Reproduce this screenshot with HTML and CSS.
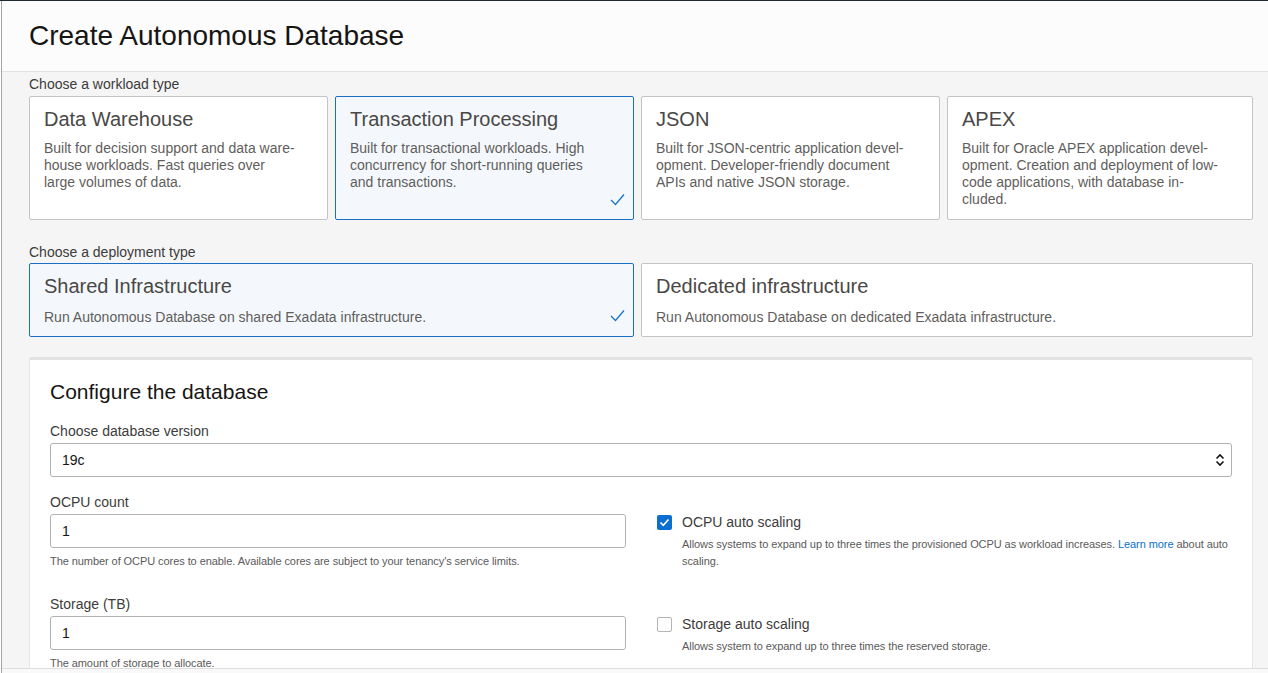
FILE: index.html
```html
<!DOCTYPE html>
<html lang="en">
<head>
<meta charset="utf-8">
<title>Create Autonomous Database</title>
<link rel="stylesheet" href="styles.css">
</head>
<body>
<div class="page">
  <header class="header">
    <h1>Create Autonomous Database</h1>
  </header>
  <main class="content">
    <div class="section-label">Choose a workload type</div>
    <div class="workload-grid">
      <div class="card">
        <div class="card-title">Data Warehouse</div>
        <div class="card-desc">Built for decision support and data ware-<br>house workloads. Fast queries over<br>large volumes of data.</div>
      </div>
      <div class="card selected">
        <div class="card-title">Transaction Processing</div>
        <div class="card-desc">Built for transactional workloads. High<br>concurrency for short-running queries<br>and transactions.</div>
        <svg class="check" viewBox="0 0 15 13" width="15" height="13"><polyline points="1,7 5.5,11.5 14,1.5" fill="none" stroke="#1a73c8" stroke-width="1.3"/></svg>
      </div>
      <div class="card">
        <div class="card-title">JSON</div>
        <div class="card-desc">Built for JSON-centric application devel-<br>opment. Developer-friendly document<br>APIs and native JSON storage.</div>
      </div>
      <div class="card">
        <div class="card-title">APEX</div>
        <div class="card-desc">Built for Oracle APEX application devel-<br>opment. Creation and deployment of low-<br>code applications, with database in-<br>cluded.</div>
      </div>
    </div>

    <div class="section-label deploy-label">Choose a deployment type</div>
    <div class="deploy-grid">
      <div class="card selected">
        <div class="card-title">Shared Infrastructure</div>
        <div class="card-desc deploy-desc">Run Autonomous Database on shared Exadata infrastructure.</div>
        <svg class="check check-deploy" viewBox="0 0 15 13" width="15" height="13"><polyline points="1,7 5.5,11.5 14,1.5" fill="none" stroke="#1a73c8" stroke-width="1.3"/></svg>
      </div>
      <div class="card">
        <div class="card-title">Dedicated infrastructure</div>
        <div class="card-desc deploy-desc">Run Autonomous Database on dedicated Exadata infrastructure.</div>
      </div>
    </div>

    <section class="panel">
      <h2 class="panel-title">Configure the database</h2>
      <div class="field first">
        <label class="field-label">Choose database version</label>
        <div class="select">
          <span>19c</span>
          <svg class="chev" viewBox="0 0 10 14" width="10" height="14"><path d="M1.5 5.5 L5 2 L8.5 5.5 M1.5 8.5 L5 12 L8.5 8.5" fill="none" stroke="#161513" stroke-width="1.6"/></svg>
        </div>
      </div>

      <div class="row">
        <div class="field">
          <label class="field-label">OCPU count</label>
          <div class="input">1</div>
          <div class="help">The number of OCPU cores to enable. Available cores are subject to your tenancy's service limits.</div>
        </div>
        <div class="opt">
          <div class="opt-head">
            <span class="cb checked"><svg viewBox="0 0 15 15" width="15" height="15"><polyline points="3.5,7.5 6.3,10.3 11.5,4.5" fill="none" stroke="#fff" stroke-width="1.6"/></svg></span>
            <span class="opt-label">OCPU auto scaling</span>
          </div>
          <div class="help opt-help">Allows systems to expand up to three times the provisioned OCPU as workload increases. <a class="link">Learn more</a> about auto<br>scaling.</div>
        </div>
      </div>

      <div class="row second">
        <div class="field">
          <label class="field-label">Storage (TB)</label>
          <div class="input">1</div>
          <div class="help">The amount of storage to allocate.</div>
        </div>
        <div class="opt">
          <div class="opt-head">
            <span class="cb"></span>
            <span class="opt-label">Storage auto scaling</span>
          </div>
          <div class="help opt-help">Allows system to expand up to three times the reserved storage.</div>
        </div>
      </div>
    </section>
  </main>
</div>
<div class="footer"></div>
</body>
</html>
```

FILE: styles.css
```css
html {
  background: #ffffff;
}

body {
  margin: 0;
  font-family: "Liberation Sans", Arial, Helvetica, sans-serif;
  border-top: 1px solid #1f2833;
}

.page {
  margin-left: 1px;
  border-left: 1px solid #a6a6a6;
  background: #f5f5f5;
  min-height: 720px;
}

.header {
  height: 70px;
  background: #fcfcfc;
  border-bottom: 1px solid #e2e2e2;
  display: flex;
  align-items: center;
  padding-left: 27px;
}

.header h1 {
  margin: 0;
  font-size: 28px;
  font-weight: 400;
  line-height: 34px;
  color: #161513;
}

.content {
  padding: 0 15px 0 27px;
}

.section-label {
  font-size: 14px;
  line-height: 16px;
  color: #3c3c3c;
  padding-top: 4px;
  margin-bottom: 4px;
}

.deploy-label {
  padding-top: 24px;
  margin-bottom: 3px;
}

.workload-grid {
  display: grid;
  grid-template-columns: 299px 299px 299px 1fr;
  gap: 7px;
}

.deploy-grid {
  display: grid;
  grid-template-columns: 605px 1fr;
  gap: 7px;
}

.card {
  position: relative;
  box-sizing: border-box;
  background: #ffffff;
  border: 1px solid #c4c4c4;
  border-radius: 2px;
  padding: 10px 14px;
}

.workload-grid .card {
  height: 124px;
}

.card.selected {
  background: #f4f8fc;
  border-color: #1a6fc4;
}

.card-title {
  font-size: 20px;
  line-height: 24px;
  color: #4a4846;
}

.card-desc {
  margin-top: 9px;
  font-size: 14px;
  line-height: 17px;
  color: #5f5e5c;
  white-space: nowrap;
}

.deploy-desc {
  margin-top: 11px;
}

.check {
  position: absolute;
  right: 8px;
  bottom: 13px;
}

.check-deploy {
  bottom: 14px;
}

.panel {
  margin-top: 20px;
  background: #ffffff;
  border: 1px solid #e6e6e6;
  border-top: 3px solid #e1e2e4;
  border-radius: 3px;
  padding: 19px 20px 40px;
}

.panel-title {
  margin: 0;
  font-size: 21px;
  font-weight: 400;
  line-height: 25px;
  color: #161513;
}

.field.first {
  margin-top: 19px;
}

.field-label {
  display: block;
  font-size: 14px;
  line-height: 17px;
  color: #3c3c3c;
  margin-bottom: 3px;
}

.row .field-label {
  margin-bottom: 3px;
}

.select,
.input {
  box-sizing: border-box;
  height: 34px;
  border: 1px solid #b2b2b2;
  border-radius: 3px;
  background: #ffffff;
  display: flex;
  align-items: center;
  padding: 0 11px;
  font-size: 14px;
  color: #161513;
}

.select {
  justify-content: space-between;
  padding-right: 6px;
}

.chev {
  display: block;
}

.row {
  display: grid;
  grid-template-columns: 1fr 1fr;
  column-gap: 30px;
  margin-top: 17px;
}

.row.second {
  margin-top: 26px;
}

.help {
  margin-top: 5px;
  font-size: 11px;
  line-height: 17px;
  color: #5a5a5a;
  letter-spacing: -0.07px;
}

.opt {
  padding-top: 20px;
}

.opt-head {
  display: flex;
  align-items: center;
  gap: 10px;
  height: 17px;
  padding-left: 1px;
}

.cb {
  box-sizing: border-box;
  width: 15px;
  height: 15px;
  border: 1px solid #b4b4b4;
  border-radius: 2px;
  background: #ffffff;
  display: block;
}

.cb.checked {
  border: none;
  background: #0a6fcf;
}

.cb svg {
  display: block;
}

.opt-label {
  font-size: 14px;
  line-height: 17px;
  color: #3c3c3c;
}

.opt-help {
  padding-left: 26px;
  margin-top: 5px;
  white-space: nowrap;
}

.link {
  color: #0a6fcf;
  text-decoration: none;
}

.footer {
  position: fixed;
  left: 2px;
  right: 0;
  bottom: 0;
  height: 4px;
  background: #f9f9f9;
  border-top: 1px solid #dedede;
}
```
